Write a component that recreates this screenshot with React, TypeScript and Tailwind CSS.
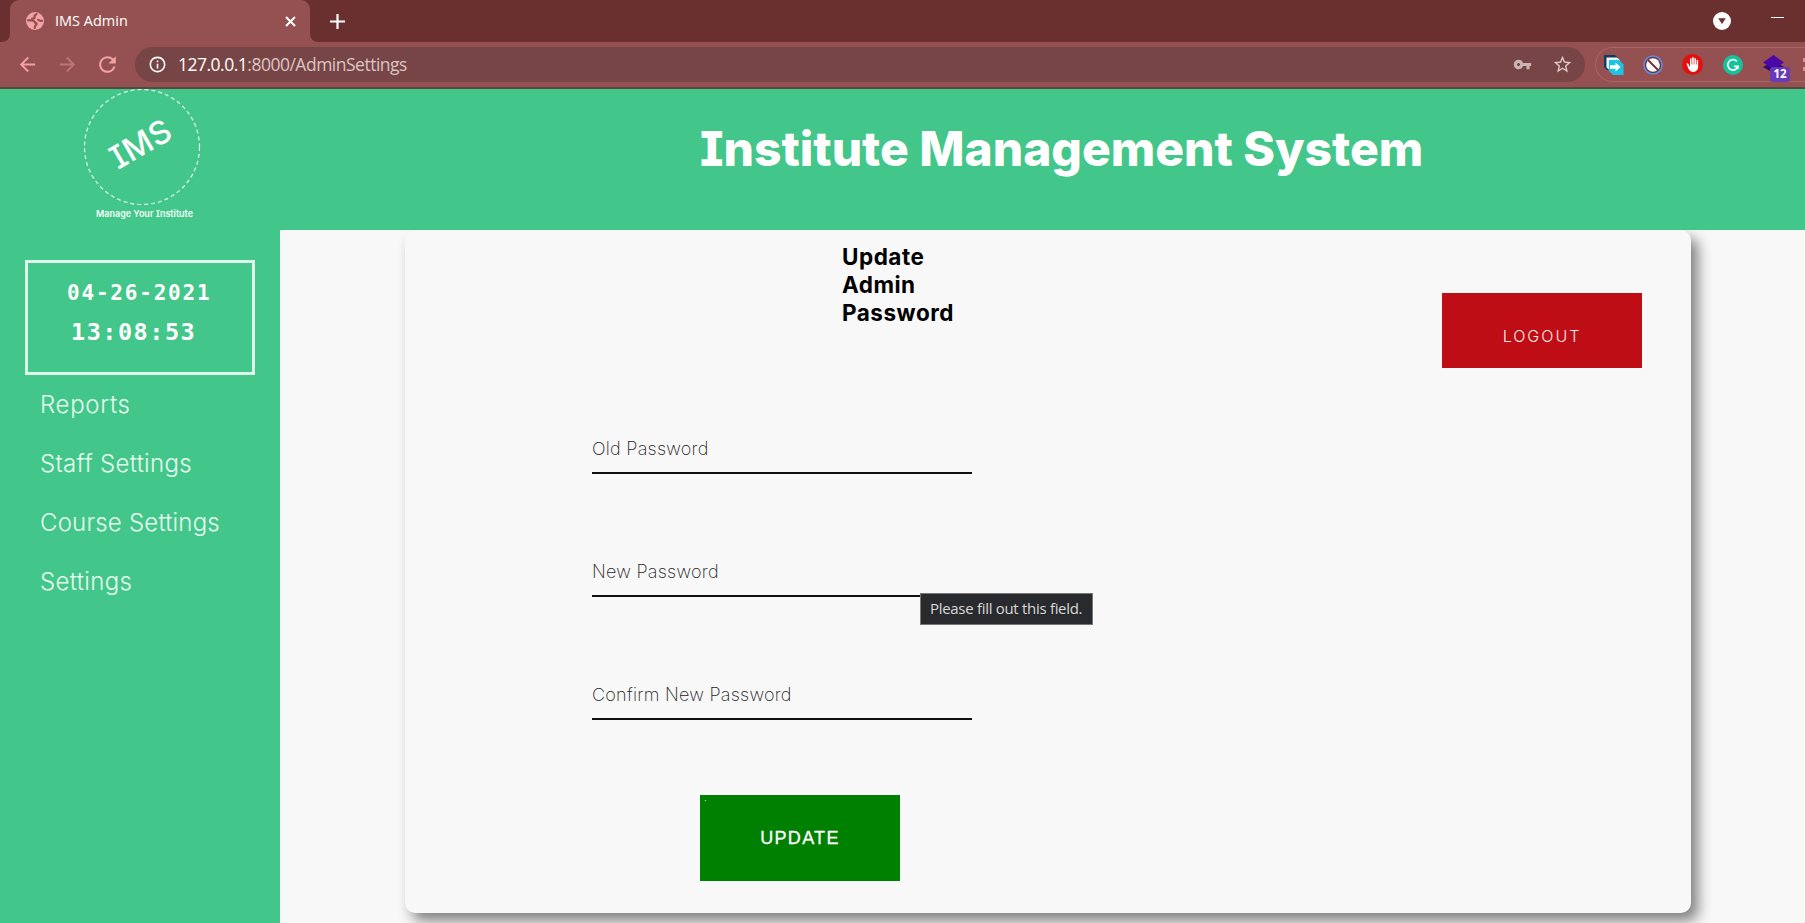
import React from "react";
import { MdArrowBack, MdArrowForward, MdRefresh, MdInfoOutline, MdStarBorder, MdVpnKey, MdBackHand } from "react-icons/md";

const links = [
  { label: "Reports", cls: "tracking-[0.7px]" },
  { label: "Staff Settings", cls: "tracking-[0.3px]" },
  { label: "Course Settings", cls: "tracking-[0.2px]" },
  { label: "Settings", cls: "tracking-[0.35px]" },
];

const fields = ["Old Password", "New Password", "Confirm New Password"];

function TabStrip() {
  return (
    <div className="flex h-[42px] bg-[#6a2f2f]">
      <div className="flex w-[10px] items-end bg-[#955151]">
        <div className="h-[42px] w-[10px] rounded-br-[8px] bg-[#6a2f2f]" />
      </div>
      <div className="flex w-[300px] items-center rounded-t-[9px] bg-[#955151] pl-[15px] pr-[14px]">
        <svg className="size-[20px]" viewBox="0 0 20 20">
          <circle cx="10" cy="10" r="9" fill="#f3a3a3" />
          <path d="M11.500 3.200C9.200 4 9.200 5 9.600 6.200 9.900 7.300 8.600 7.800 7.200 7.600M3 9.300h4.600c1.700 0 1.600 2.200 3 2.500 1.500.3 1.200 1.900.2 2.500-.9.500-1 1.600-1 2.600M17 9.800c-1.700.3-3-.1-3.800-1" fill="none" stroke="#955151" strokeWidth="2.200" strokeLinecap="round" />
        </svg>
        <span className="mb-px ml-[10px] grow text-[14.500px] text-white">IMS Admin</span>
        <svg className="size-[11px]" viewBox="0 0 11 11">
          <path d="M1 1l9 9M10 1l-9 9" stroke="#fff" strokeWidth="1.900" />
        </svg>
      </div>
      <div className="bg-[#955151]">
        <div className="flex h-[42px] w-[54px] items-center justify-center rounded-bl-[8px] bg-[#6a2f2f]">
          <svg className="size-[15px]" viewBox="0 0 15 15">
            <path d="M0 7.500h15M7.500 0v15" stroke="#fff" strokeWidth="2.200" />
          </svg>
        </div>
      </div>
      <div className="flex grow items-center justify-end pr-[21px]">
        <svg className="mr-[40px] size-[18px]" viewBox="0 0 18 18">
          <circle cx="9" cy="9" r="9" fill="#fff" />
          <path d="M5.200 6.200h7.600L9 12z" fill="#6a2f2f" />
        </svg>
        <div className="mb-[8px] h-px w-[13px] bg-white" />
      </div>
    </div>
  );
}

function Extensions() {
  return (
    <div className="ml-[10px] flex h-[35px] grow items-center rounded-l-full border border-r-0 border-[#a96464] pl-[8px]">
      <svg className="size-[20px] shrink-0" viewBox="0 0 20 20">
        <path d="M0 0h11l3 3v12H3l-3-3z" fill="#153a5b" />
        <path d="M2.500 2.500h10.500l3 3v10H6l-3.500-3z" fill="#e8fbff" />
        <path d="M5 5h10l4.500 4.500V20H9l-4-4z" fill="#1cc4e4" />
        <path d="M6 10.300h5.500V7.500l5 4.500-5 4.500v-2.800H6z" fill="#fff" />
      </svg>
      <svg className="ml-[19px] size-[20px] shrink-0" viewBox="0 0 20 20">
        <circle cx="10" cy="10" r="9" fill="#70343a" stroke="#5b8fe0" strokeWidth="1.600" />
        <circle cx="10" cy="10" r="6.800" fill="#fff" />
        <path d="M5 5l10 10" stroke="#70343a" strokeWidth="2" />
      </svg>
      <div className="ml-[19px] flex size-[21px] shrink-0 items-center justify-center rounded-full bg-[#e2110f]">
        <MdBackHand className="size-[15px] text-white" />
      </div>
      <svg className="ml-[20px] size-[20px] shrink-0" viewBox="0 0 20 20">
        <circle cx="10" cy="10" r="10" fill="#15c39a" />
        <path d="M13.800 6.300A5.200 5.200 0 1 0 15 11.300h-4M15 10.500v3.600" fill="none" stroke="#fff" strokeWidth="1.700" />
      </svg>
      <div className="relative ml-[20px] h-[20px] w-[21px] shrink-0">
        <svg className="size-full" viewBox="0 0 21 20">
          <path d="M0 12l10.500-6L21 12l-10.500 6z" fill="#35067a" />
          <path d="M0 7.500L10.500 0 21 7.500 10.500 14z" fill="#4a08a8" />
        </svg>
        <span className="absolute left-[7px] top-[12px] flex h-[15px] w-[20px] items-center justify-center rounded-[3px] bg-[#673ab7] text-[11.500px] font-bold text-white">12</span>
      </div>
      <div className="grow" />
      <div className="h-[13px] w-[2px] border-y-4 border-[#e08f8f]" />
    </div>
  );
}

function Toolbar() {
  return (
    <div className="flex h-[47px] items-start border-b-2 border-[#56493f] bg-[#955151] pt-[5px]">
      <div className="flex h-[35px] w-[135px] items-center pl-[16px] text-[#f3a0a0]">
        <MdArrowBack className="size-[23px]" />
        <MdArrowForward className="ml-[17px] size-[23px] opacity-45" />
        <MdRefresh className="ml-[16px] size-[25px]" />
      </div>
      <div className="flex h-[35px] w-[1450px] items-center rounded-full bg-[#774545] pl-[13px] pr-[12px]">
        <MdInfoOutline className="size-[19px] text-white" />
        <div className="ml-[11px] grow text-[17.500px] tracking-[-0.5px] text-[#dcc4c4]">
          <span className="text-white">127.0.0.1</span>:8000/AdminSettings
        </div>
        <MdVpnKey className="mr-[20px] size-[19px] text-[#cbb3b3]" />
        <MdStarBorder className="size-[21px] text-[#dccaca]" />
      </div>
      <Extensions />
    </div>
  );
}

function Header() {
  return (
    <header className="relative z-10 flex h-[141px] bg-[#43c68a] text-white">
      <div className="w-[280px] pl-[84px]">
        <svg className="h-[135px] w-[120px] overflow-visible" viewBox="0 0 120 135">
          <circle cx="58" cy="58" r="57.500" fill="none" stroke="#e4faef" strokeWidth="1.200" strokeDasharray="4 3" />
          <text x="34" y="81" transform="rotate(-30 34 81)" textLength="65" fontSize="32" fontWeight="500" fill="#fff" style={{ fontFamily: "Inter, sans-serif", fontFeatureSettings: '"cv08"' }}>IMS</text>
          <text x="12" y="128" textLength="97" lengthAdjust="spacingAndGlyphs" fontSize="9.500" fontWeight="600" fill="#f1fff8" style={{ fontFamily: "Inter, sans-serif", fontFeatureSettings: '"cv08"' }}>Manage Your Institute</text>
        </svg>
      </div>
      <h1 className="pl-[420px] pt-[29px] font-['Inter'] text-[48px] font-extrabold leading-[62px] tracking-[-0.030px] whitespace-nowrap [font-feature-settings:'cv08']">
        Institute Management System
      </h1>
    </header>
  );
}

function Sidebar() {
  return (
    <aside className="w-[280px] bg-[#43c68a] pt-[30px]">
      <div className="ml-[25px] h-[115px] w-[230px] border-[3px] border-[#dff6eb] pt-[14px] font-['DejaVu_Sans_Mono'] font-bold text-white">
        <div className="pl-[39px] text-[21px] leading-[32px] tracking-[1.800px]">04-26-2021</div>
        <div className="mt-[7px] pl-[43px] text-[23.500px] leading-[32px] tracking-[1.500px]">13:08:53</div>
      </div>
      <nav className="flex flex-col pl-[40px] font-['Inter'] text-[24px] font-light text-[#e6faf0]">
        {links.map((l) => (
          <a key={l.label} className={`h-[59px] leading-[60px] ${l.cls}`}>{l.label}</a>
        ))}
      </nav>
    </aside>
  );
}

function Field({ label }: { label: string }) {
  return (
    <div className="relative h-[123px]">
      <div className="h-[43px] w-[380px] border-b-2 border-[#111] font-['Inter'] text-[18px] font-extralight leading-[35px] tracking-[0.250px] text-[#222]">
        {label}
      </div>
      {label === "New Password" && (
        <div className="absolute left-[328px] top-[39px] flex h-[32px] w-[173px] items-center border border-[#767676] bg-[#292a2d] pb-[2px] pl-[9px] text-[15px] tracking-[-0.300px] whitespace-nowrap text-[#d8d8d8]">
          Please fill out this field.
        </div>
      )}
    </div>
  );
}

export default function App() {
  return (
    <div className="flex h-[923px] w-[1805px] flex-col overflow-hidden bg-[#f8f8f8] font-['Open_Sans']">
      <TabStrip />
      <Toolbar />
      <Header />
      <div className="flex grow">
        <Sidebar />
        <main className="flex grow pl-[125px]">
          <section className="flex h-[683px] w-[1286px] justify-between rounded-[10px] bg-[#f8f8f8] pl-[187px] pr-[49px] shadow-[7px_8px_14px_#808080]">
            <div className="w-[380px]">
              <h2 className="ml-[250px] w-[122px] pt-[13px] font-['Inter'] text-[22.500px] font-bold leading-[28px] tracking-[0.500px] text-black">
                Update Admin Password
              </h2>
              <div className="mt-[104px]">
                {fields.map((f) => (
                  <Field key={f} label={f} />
                ))}
              </div>
              <button className="relative -mt-[5px] ml-[108px] block h-[86px] w-[200px] bg-[#008000] font-['Liberation_Sans'] text-[18px] tracking-[1.300px] text-white [-webkit-text-stroke:0.300px_white]">
                <span className="absolute left-[5px] top-[5px] size-px bg-white" />
                UPDATE
              </button>
            </div>
            <button className="mt-[63px] h-[75px] w-[200px] bg-[#bf0d16] pt-[11px] font-['Inter'] text-[16px] font-light tracking-[2px] text-[#ffecec]">
              LOGOUT
            </button>
          </section>
        </main>
      </div>
    </div>
  );
}
